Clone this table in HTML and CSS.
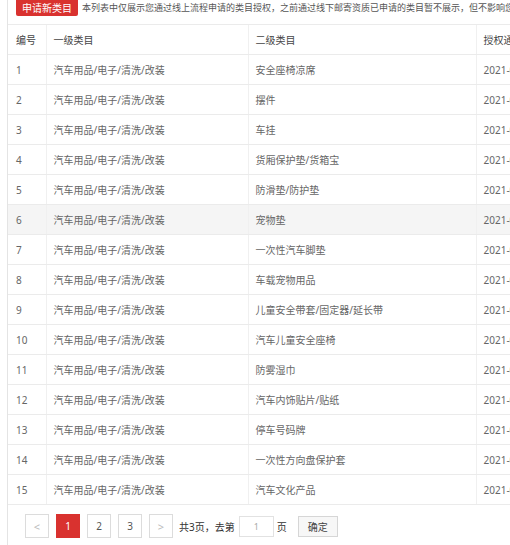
FILE: index.html
```html
<!DOCTYPE html>
<html lang="zh-CN">
<head>
<meta charset="utf-8">
<title>类目授权</title>
<link rel="stylesheet" href="styles.css">
</head>
<body>
<div class="page">
  <div class="toolbar">
    <button class="btn-apply">申请新类目</button>
    <span class="note">本列表中仅展示您通过线上流程申请的类目授权，之前通过线下邮寄资质已申请的类目暂不展示，但不影响您已有的类目授权</span>
  </div>
  <table class="grid">
    <colgroup>
      <col class="c1"><col class="c2"><col class="c3"><col class="c4">
    </colgroup>
    <thead>
      <tr><th>编号</th><th>一级类目</th><th>二级类目</th><th>授权通过时间</th></tr>
    </thead>
    <tbody>
      <tr><td>1</td><td>汽车用品/电子/清洗/改装</td><td>安全座椅凉席</td><td>2021-03-12</td></tr>
      <tr><td>2</td><td>汽车用品/电子/清洗/改装</td><td>摆件</td><td>2021-03-12</td></tr>
      <tr><td>3</td><td>汽车用品/电子/清洗/改装</td><td>车挂</td><td>2021-03-12</td></tr>
      <tr><td>4</td><td>汽车用品/电子/清洗/改装</td><td>货厢保护垫/货箱宝</td><td>2021-03-12</td></tr>
      <tr><td>5</td><td>汽车用品/电子/清洗/改装</td><td>防滑垫/防护垫</td><td>2021-03-12</td></tr>
      <tr class="hover"><td>6</td><td>汽车用品/电子/清洗/改装</td><td>宠物垫</td><td>2021-03-12</td></tr>
      <tr><td>7</td><td>汽车用品/电子/清洗/改装</td><td>一次性汽车脚垫</td><td>2021-03-12</td></tr>
      <tr><td>8</td><td>汽车用品/电子/清洗/改装</td><td>车载宠物用品</td><td>2021-03-12</td></tr>
      <tr><td>9</td><td>汽车用品/电子/清洗/改装</td><td>儿童安全带套/固定器/延长带</td><td>2021-03-12</td></tr>
      <tr><td>10</td><td>汽车用品/电子/清洗/改装</td><td>汽车儿童安全座椅</td><td>2021-03-12</td></tr>
      <tr><td>11</td><td>汽车用品/电子/清洗/改装</td><td>防雾湿巾</td><td>2021-03-12</td></tr>
      <tr><td>12</td><td>汽车用品/电子/清洗/改装</td><td>汽车内饰贴片/贴纸</td><td>2021-03-12</td></tr>
      <tr><td>13</td><td>汽车用品/电子/清洗/改装</td><td>停车号码牌</td><td>2021-03-12</td></tr>
      <tr><td>14</td><td>汽车用品/电子/清洗/改装</td><td>一次性方向盘保护套</td><td>2021-03-12</td></tr>
      <tr><td>15</td><td>汽车用品/电子/清洗/改装</td><td>汽车文化产品</td><td>2021-03-12</td></tr>
    </tbody>
  </table>
  <div class="pager">
    <span class="pg pg-arrow">&lt;</span>
    <span class="pg pg-active">1</span>
    <span class="pg">2</span>
    <span class="pg">3</span>
    <span class="pg pg-arrow">&gt;</span>
    <span class="pg-text">共3页，去第</span>
    <span class="pg-input">1</span>
    <span class="pg-text">页</span>
    <span class="pg-ok">确定</span>
  </div>
</div>
</body>
</html>
```

FILE: styles.css
```css
html, body {
  margin: 0;
  padding: 0;
  background: #fff;
  overflow: hidden;
}
body {
  width: 510px;
  height: 545px;
  font-family: "Noto Sans", "Noto Sans CJK SC", sans-serif;
  color: #666;
}
.page {
  margin-left: 7px;
  border-left: 1px solid #e4e4e4;
  height: 545px;
  width: 640px;
}
.toolbar {
  display: flex;
  align-items: center;
  gap: 4px;
  padding-left: 8px;
  height: 16px;
  white-space: nowrap;
}
.btn-apply {
  height: 16px;
  width: 62px;
  padding: 0;
  margin: 0;
  border: none;
  border-radius: 0 0 2px 2px;
  background: #d9322f;
  color: #fff;
  font-family: inherit;
  font-size: 10px;
  line-height: 16px;
}
.note {
  font-size: 9px;
  color: #555;
  line-height: 14px;
}
.grid {
  margin-top: 8px;
  border-collapse: collapse;
  width: 620px;
  table-layout: fixed;
  font-size: 10px;
}
.c1 { width: 38px; }
.c2 { width: 202px; }
.c3 { width: 228px; }
.c4 { width: 152px; }
.grid th, .grid td {
  height: 29px;
  padding: 0 0 0 7px;
  text-align: left;
  border-top: 1px solid #ebebeb;
  border-bottom: 1px solid #ebebeb;
  border-left: 1px solid #f0f0f0;
  white-space: nowrap;
  overflow: hidden;
}
.grid th:first-child, .grid td:first-child {
  border-left: none;
  padding-left: 8px;
}
.grid th {
  font-weight: normal;
  color: #444;
}
.grid tr.hover td {
  background: #f5f5f5;
}
.pager {
  display: flex;
  align-items: center;
  margin-top: 9px;
  padding-left: 17px;
  height: 24px;
  font-size: 10px;
}
.pg {
  box-sizing: border-box;
  width: 24px;
  height: 24px;
  margin-right: 7px;
  border: 1px solid #dcdcdc;
  background: #fff;
  color: #555;
  display: flex;
  align-items: center;
  justify-content: center;
}
.pg-arrow {
  color: #bbb;
  font-size: 11px;
}
.pg-active {
  background: #d9322f;
  border-color: #d9322f;
  color: #fff;
}
.pg-text {
  color: #333;
  margin-left: -1px;
}
.pg-input {
  box-sizing: border-box;
  width: 35px;
  height: 21px;
  margin: 0 4px;
  border: 1px solid #e2e2e2;
  color: #aaa;
  display: flex;
  align-items: center;
  justify-content: center;
  font-size: 9px;
}
.pg-ok {
  box-sizing: border-box;
  margin-left: 11px;
  width: 40px;
  height: 21px;
  border: 1px solid #d6d6d6;
  background: #f7f7f7;
  color: #444;
  display: flex;
  align-items: center;
  justify-content: center;
}
```
